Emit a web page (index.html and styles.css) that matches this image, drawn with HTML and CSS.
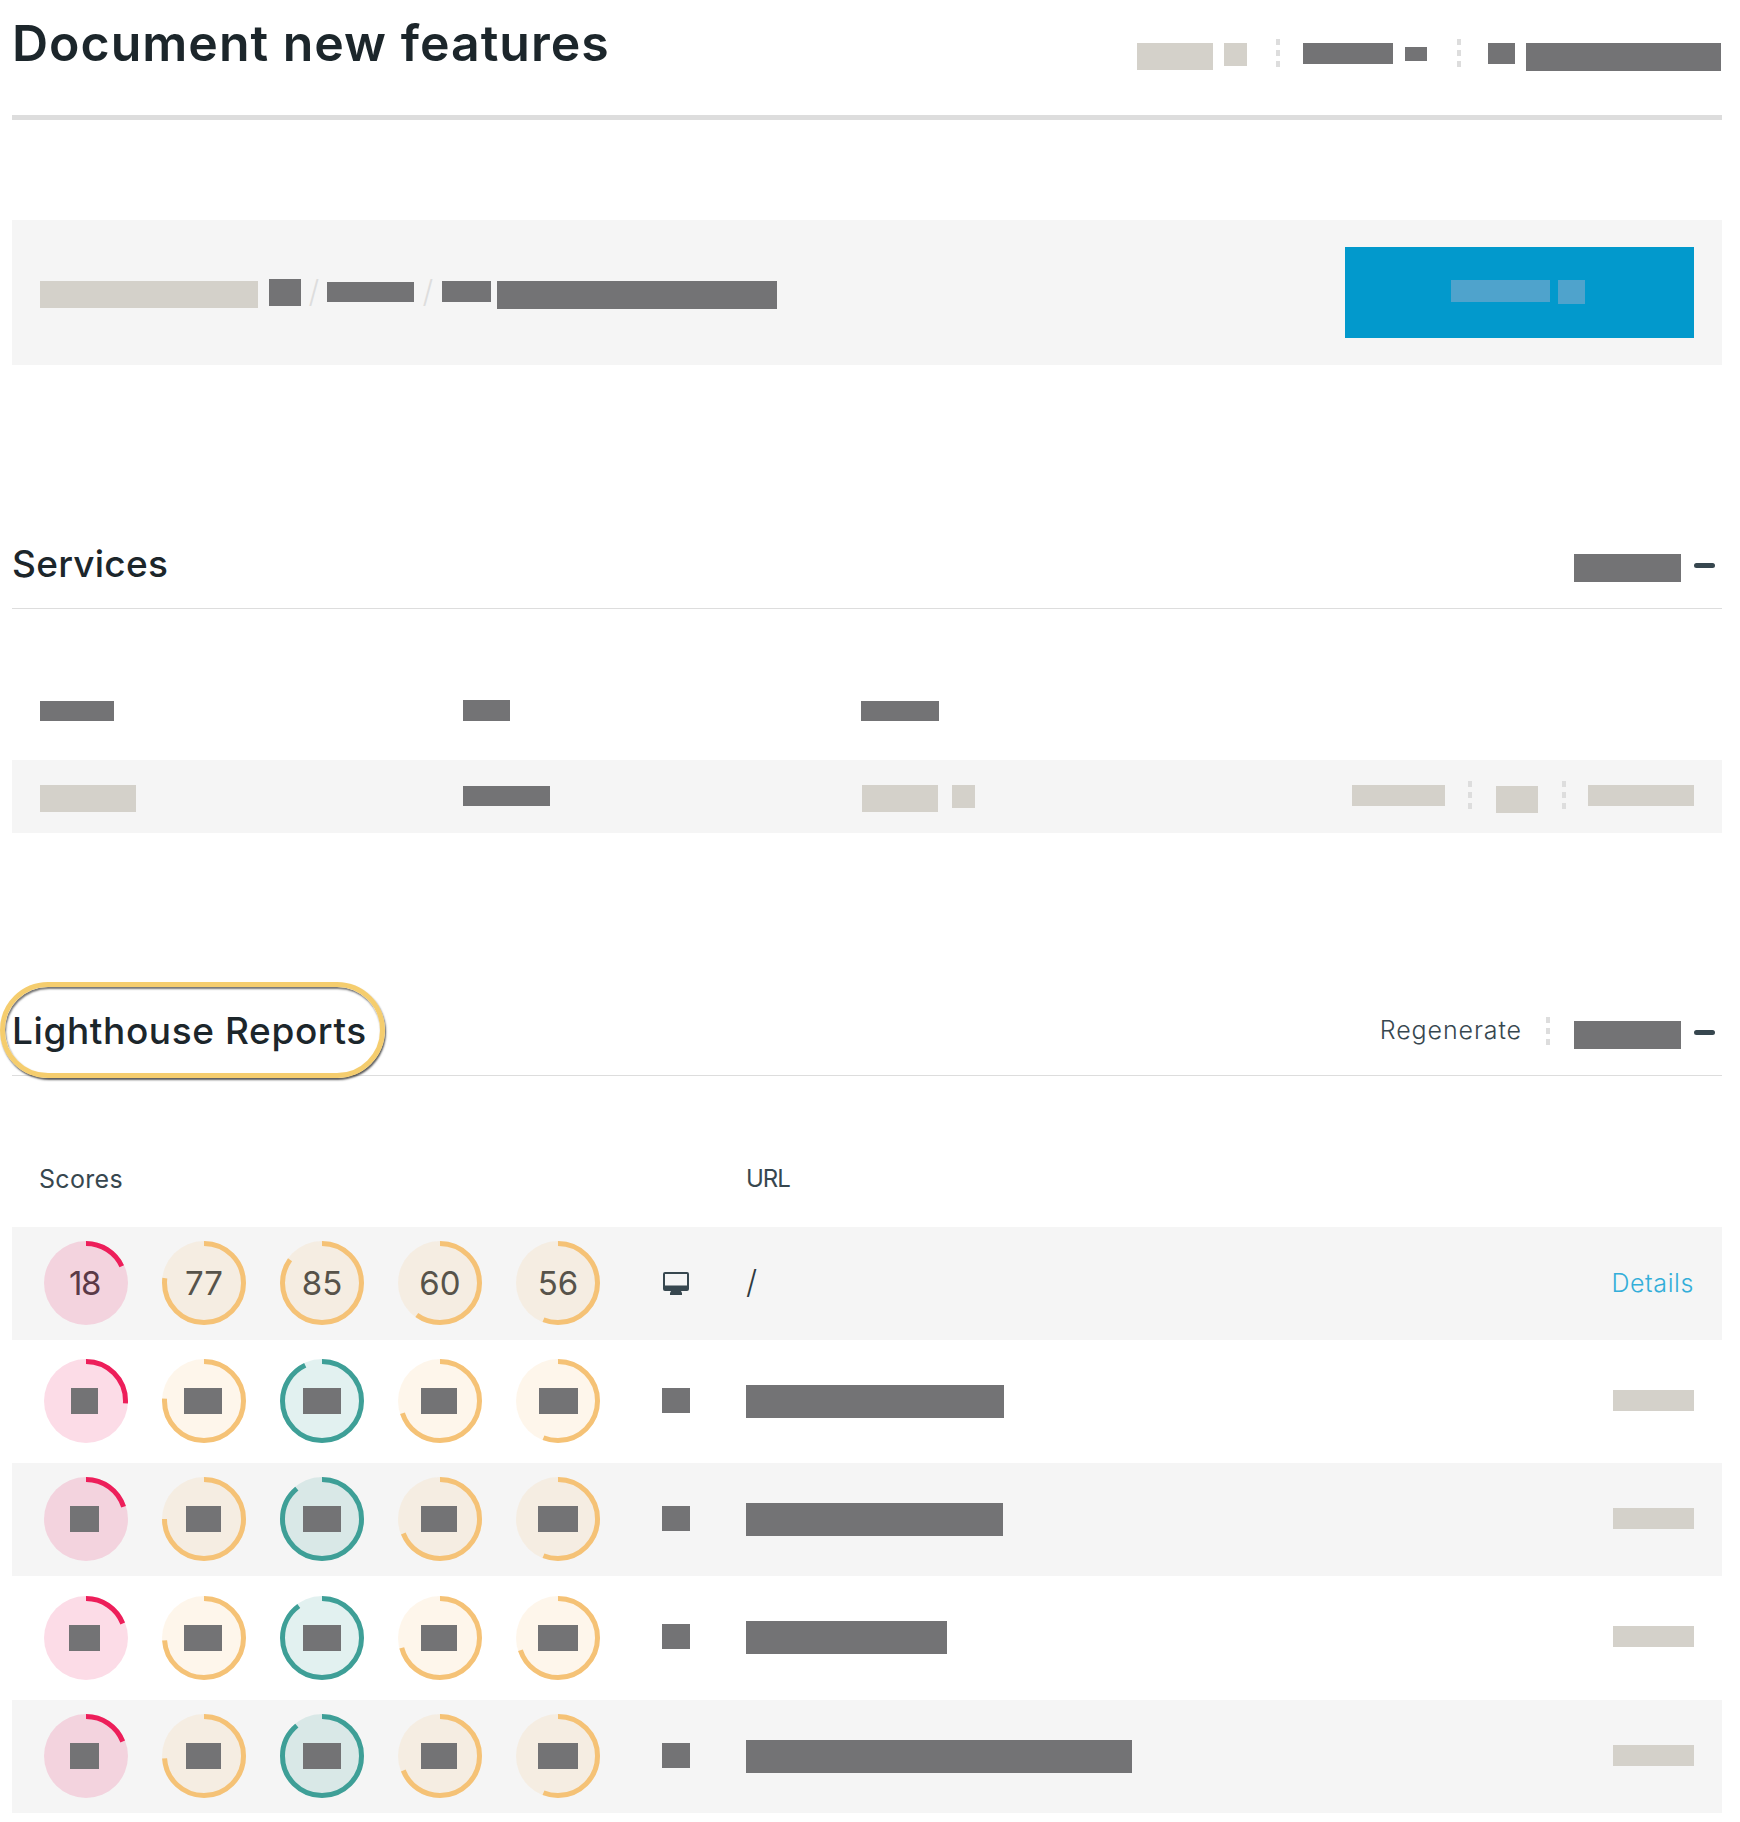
FILE: index.html
```html
<!DOCTYPE html>
<html lang="en">
<head>
  <meta charset="UTF-8">
  <title>Document new features</title>
  <link rel="stylesheet" href="styles.css">
</head>
<body>
  <div class="container">
    <header class="page-head">
      <h1>Document new features</h1>
      <div class="page-actions">
        <span class="mask light w-76 h-27"></span>
        <span class="mask light w-23 h-23 ml-11"></span>
        <span class="dots ml-29 up-4"></span>
        <span class="mask dark w-90 h-21 ml-23"></span>
        <span class="mask dark w-22 h-14 ml-12 mt-4"></span>
        <span class="dots ml-30 up-4"></span>
        <span class="mask dark w-27 h-21 ml-27"></span>
        <span class="mask dark w-195 h-28 ml-11"></span>
      </div>
    </header>

    <section class="deploy-panel">
      <div class="crumbs">
        <span class="mask light w-218 h-27 mt-2"></span>
        <span class="mask dark w-32 h-27 ml-11"></span>
        <span class="slash">/</span>
        <span class="mask dark w-87 h-20 mt-3"></span>
        <span class="slash wide">/</span>
        <span class="mask dark w-49 h-21 mt-2"></span>
        <span class="mask dark w-280 h-28 ml-6 mt-2"></span>
      </div>
      <div class="deploy-button">
        <span class="mask pale w-99 h-22"></span>
        <span class="mask pale w-27 h-24"></span>
      </div>
    </section>

    <section class="block">
      <div class="block-head">
        <h2>Services</h2>
        <div class="block-actions">
          <span class="mask dark w-107 h-28"></span>
          <span class="collapse"></span>
        </div>
      </div>
      <div class="services-labels">
        <span class="col-name"><span class="mask dark w-74 h-20"></span></span>
        <span class="col-type"><span class="mask dark w-47 h-21 up-1"></span></span>
        <span class="col-state"><span class="mask dark w-78 h-20"></span></span>
      </div>
      <div class="services-row">
        <span class="col-name"><span class="mask light w-96 h-27"></span></span>
        <span class="col-type"><span class="mask dark w-87 h-20 mt-1"></span></span>
        <span class="col-state">
          <span class="mask light w-76 h-27 ml-1"></span>
          <span class="mask light w-23 h-23 ml-14"></span>
        </span>
        <div class="services-links">
          <span class="mask light w-93 h-21"></span>
          <span class="dots ml-23 up-4"></span>
          <span class="mask light w-42 h-27 ml-24 mt-1"></span>
          <span class="dots ml-24 up-4"></span>
          <span class="mask light w-106 h-21 ml-22"></span>
        </div>
      </div>
    </section>

    <section class="block block-reports">
      <div class="block-head">
        <h2 class="circled">Lighthouse Reports</h2>
        <div class="block-actions">
          <a class="regenerate">Regenerate</a>
          <span class="dots head-dots"></span>
          <span class="mask dark w-107 h-28"></span>
          <span class="collapse"></span>
        </div>
      </div>
      <div class="reports-labels">
        <span class="label-scores">Scores</span>
        <span class="label-url">URL</span>
      </div>

      <div class="report">
        <div class="score red"><svg viewBox="0 0 84 84"><circle class="ring-bg" cx="42" cy="42" r="42"/><circle class="ring" cx="42" cy="42" r="39.5" pathLength="100" stroke-dasharray="18 100"/></svg><span>18</span></div>
        <div class="score amber"><svg viewBox="0 0 84 84"><circle class="ring-bg" cx="42" cy="42" r="42"/><circle class="ring" cx="42" cy="42" r="39.5" pathLength="100" stroke-dasharray="77 100"/></svg><span>77</span></div>
        <div class="score amber"><svg viewBox="0 0 84 84"><circle class="ring-bg" cx="42" cy="42" r="42"/><circle class="ring" cx="42" cy="42" r="39.5" pathLength="100" stroke-dasharray="85 100"/></svg><span>85</span></div>
        <div class="score amber"><svg viewBox="0 0 84 84"><circle class="ring-bg" cx="42" cy="42" r="42"/><circle class="ring" cx="42" cy="42" r="39.5" pathLength="100" stroke-dasharray="60 100"/></svg><span>60</span></div>
        <div class="score amber"><svg viewBox="0 0 84 84"><circle class="ring-bg" cx="42" cy="42" r="42"/><circle class="ring" cx="42" cy="42" r="39.5" pathLength="100" stroke-dasharray="56 100"/></svg><span>56</span></div>
        <div class="device">
          <svg class="monitor" viewBox="0 0 26 23"><path d="M2 0h22a2 2 0 0 1 2 2v15a2 2 0 0 1-2 2h-6l1 2v2H7v-2l1-2H2a2 2 0 0 1-2-2V2a2 2 0 0 1 2-2zm0 2v11.500h22V2z" fill-rule="evenodd"/></svg>
        </div>
        <div class="url url-path">/</div>
        <a class="details">Details</a>
      </div>

      <div class="report">
        <div class="score red"><svg viewBox="0 0 84 84"><circle class="ring-bg" cx="42" cy="42" r="42"/><circle class="ring" cx="42" cy="42" r="39.5" pathLength="100" stroke-dasharray="26 100"/></svg><span class="mask dark w-27 h-26"></span></div>
        <div class="score amber"><svg viewBox="0 0 84 84"><circle class="ring-bg" cx="42" cy="42" r="42"/><circle class="ring" cx="42" cy="42" r="39.5" pathLength="100" stroke-dasharray="76 100"/></svg><span class="mask dark w-38 h-26"></span></div>
        <div class="score teal"><svg viewBox="0 0 84 84"><circle class="ring-bg" cx="42" cy="42" r="42"/><circle class="ring" cx="42" cy="42" r="39.5" pathLength="100" stroke-dasharray="93 100"/></svg><span class="mask dark w-38 h-26"></span></div>
        <div class="score amber"><svg viewBox="0 0 84 84"><circle class="ring-bg" cx="42" cy="42" r="42"/><circle class="ring" cx="42" cy="42" r="39.5" pathLength="100" stroke-dasharray="70 100"/></svg><span class="mask dark w-36 h-26"></span></div>
        <div class="score amber"><svg viewBox="0 0 84 84"><circle class="ring-bg" cx="42" cy="42" r="42"/><circle class="ring" cx="42" cy="42" r="39.5" pathLength="100" stroke-dasharray="56 100"/></svg><span class="mask dark w-39 h-26"></span></div>
        <div class="device"><span class="mask dark w-28 h-25"></span></div>
        <div class="url"><span class="mask dark w-258 h-33"></span></div>
        <span class="mask light details-mask"></span>
      </div>

      <div class="report">
        <div class="score red"><svg viewBox="0 0 84 84"><circle class="ring-bg" cx="42" cy="42" r="42"/><circle class="ring" cx="42" cy="42" r="39.5" pathLength="100" stroke-dasharray="20 100"/></svg><span class="mask dark w-29 h-26"></span></div>
        <div class="score amber"><svg viewBox="0 0 84 84"><circle class="ring-bg" cx="42" cy="42" r="42"/><circle class="ring" cx="42" cy="42" r="39.5" pathLength="100" stroke-dasharray="75 100"/></svg><span class="mask dark w-35 h-26"></span></div>
        <div class="score teal"><svg viewBox="0 0 84 84"><circle class="ring-bg" cx="42" cy="42" r="42"/><circle class="ring" cx="42" cy="42" r="39.5" pathLength="100" stroke-dasharray="89 100"/></svg><span class="mask dark w-38 h-26"></span></div>
        <div class="score amber"><svg viewBox="0 0 84 84"><circle class="ring-bg" cx="42" cy="42" r="42"/><circle class="ring" cx="42" cy="42" r="39.5" pathLength="100" stroke-dasharray="69 100"/></svg><span class="mask dark w-36 h-26"></span></div>
        <div class="score amber"><svg viewBox="0 0 84 84"><circle class="ring-bg" cx="42" cy="42" r="42"/><circle class="ring" cx="42" cy="42" r="39.5" pathLength="100" stroke-dasharray="56 100"/></svg><span class="mask dark w-40 h-26"></span></div>
        <div class="device"><span class="mask dark w-28 h-25"></span></div>
        <div class="url"><span class="mask dark w-257 h-33"></span></div>
        <span class="mask light details-mask"></span>
      </div>

      <div class="report">
        <div class="score red"><svg viewBox="0 0 84 84"><circle class="ring-bg" cx="42" cy="42" r="42"/><circle class="ring" cx="42" cy="42" r="39.5" pathLength="100" stroke-dasharray="19 100"/></svg><span class="mask dark w-31 h-26"></span></div>
        <div class="score amber"><svg viewBox="0 0 84 84"><circle class="ring-bg" cx="42" cy="42" r="42"/><circle class="ring" cx="42" cy="42" r="39.5" pathLength="100" stroke-dasharray="74 100"/></svg><span class="mask dark w-38 h-26"></span></div>
        <div class="score teal"><svg viewBox="0 0 84 84"><circle class="ring-bg" cx="42" cy="42" r="42"/><circle class="ring" cx="42" cy="42" r="39.5" pathLength="100" stroke-dasharray="90 100"/></svg><span class="mask dark w-38 h-26"></span></div>
        <div class="score amber"><svg viewBox="0 0 84 84"><circle class="ring-bg" cx="42" cy="42" r="42"/><circle class="ring" cx="42" cy="42" r="39.5" pathLength="100" stroke-dasharray="71 100"/></svg><span class="mask dark w-36 h-26"></span></div>
        <div class="score amber"><svg viewBox="0 0 84 84"><circle class="ring-bg" cx="42" cy="42" r="42"/><circle class="ring" cx="42" cy="42" r="39.5" pathLength="100" stroke-dasharray="70 100"/></svg><span class="mask dark w-40 h-26"></span></div>
        <div class="device"><span class="mask dark w-28 h-25"></span></div>
        <div class="url"><span class="mask dark w-201 h-33"></span></div>
        <span class="mask light details-mask"></span>
      </div>

      <div class="report">
        <div class="score red"><svg viewBox="0 0 84 84"><circle class="ring-bg" cx="42" cy="42" r="42"/><circle class="ring" cx="42" cy="42" r="39.5" pathLength="100" stroke-dasharray="19 100"/></svg><span class="mask dark w-29 h-26"></span></div>
        <div class="score amber"><svg viewBox="0 0 84 84"><circle class="ring-bg" cx="42" cy="42" r="42"/><circle class="ring" cx="42" cy="42" r="39.5" pathLength="100" stroke-dasharray="74 100"/></svg><span class="mask dark w-35 h-26"></span></div>
        <div class="score teal"><svg viewBox="0 0 84 84"><circle class="ring-bg" cx="42" cy="42" r="42"/><circle class="ring" cx="42" cy="42" r="39.5" pathLength="100" stroke-dasharray="89 100"/></svg><span class="mask dark w-38 h-26"></span></div>
        <div class="score amber"><svg viewBox="0 0 84 84"><circle class="ring-bg" cx="42" cy="42" r="42"/><circle class="ring" cx="42" cy="42" r="39.5" pathLength="100" stroke-dasharray="69 100"/></svg><span class="mask dark w-36 h-26"></span></div>
        <div class="score amber"><svg viewBox="0 0 84 84"><circle class="ring-bg" cx="42" cy="42" r="42"/><circle class="ring" cx="42" cy="42" r="39.5" pathLength="100" stroke-dasharray="56 100"/></svg><span class="mask dark w-40 h-26"></span></div>
        <div class="device"><span class="mask dark w-28 h-25"></span></div>
        <div class="url"><span class="mask dark w-386 h-33"></span></div>
        <span class="mask light details-mask"></span>
      </div>
    </section>
  </div>
</body>
</html>
```

FILE: styles.css
```css
body {
  margin: 0;
  background: #fff;
  color: #37474f;
  font-family: Inter, "Open Sans", sans-serif;
}
.container {
  padding: 0 18px 9px 12px;
}
h1, h2 {
  margin: 0;
  color: #1c262b;
  font-weight: 500;
}

/* redacted blocks */
.mask {
  display: block;
  flex: none;
}
.dark { background: #737375; }
.light { background: #d4d1ca; }
.pale { background: #4fa3cc; }
.dots {
  display: block;
  flex: none;
  width: 4px;
  height: 28px;
  background: repeating-linear-gradient(#ddd 0 6px, transparent 6px 11px);
}

.w-22 { width: 22px; }
.w-23 { width: 23px; }
.w-27 { width: 27px; }
.w-28 { width: 28px; }
.w-29 { width: 29px; }
.w-31 { width: 31px; }
.w-32 { width: 32px; }
.w-35 { width: 35px; }
.w-36 { width: 36px; }
.w-38 { width: 38px; }
.w-39 { width: 39px; }
.w-40 { width: 40px; }
.w-42 { width: 42px; }
.w-47 { width: 47px; }
.w-49 { width: 49px; }
.w-74 { width: 74px; }
.w-76 { width: 76px; }
.w-78 { width: 78px; }
.w-87 { width: 87px; }
.w-90 { width: 90px; }
.w-93 { width: 93px; }
.w-96 { width: 96px; }
.w-99 { width: 99px; }
.w-106 { width: 106px; }
.w-107 { width: 107px; }
.w-195 { width: 195px; }
.w-201 { width: 201px; }
.w-218 { width: 218px; }
.w-257 { width: 257px; }
.w-258 { width: 258px; }
.w-280 { width: 280px; }
.w-386 { width: 386px; }
.h-14 { height: 14px; }
.h-20 { height: 20px; }
.h-21 { height: 21px; }
.h-22 { height: 22px; }
.h-23 { height: 23px; }
.h-24 { height: 24px; }
.h-25 { height: 25px; }
.h-26 { height: 26px; }
.h-27 { height: 27px; }
.h-28 { height: 28px; }
.h-33 { height: 33px; }
.ml-1 { margin-left: 1px; }
.ml-6 { margin-left: 6px; }
.ml-11 { margin-left: 11px; }
.ml-12 { margin-left: 12px; }
.ml-14 { margin-left: 14px; }
.ml-22 { margin-left: 22px; }
.ml-23 { margin-left: 23px; }
.ml-24 { margin-left: 24px; }
.ml-27 { margin-left: 27px; }
.ml-29 { margin-left: 29px; }
.ml-30 { margin-left: 30px; }
.mt-1 { margin-top: 1px; }
.mt-2 { margin-top: 2px; }
.mt-3 { margin-top: 3px; }
.mt-4 { margin-top: 4px; }
.up-1 { margin-top: -1px; }
.up-4 { margin-top: -4px; }

/* page header */
.page-head {
  display: flex;
  justify-content: space-between;
  height: 115px;
  border-bottom: 5px solid #ddd;
}
.page-head h1 {
  margin-top: 14px;
  font-size: 50px;
  font-weight: 600;
  line-height: 58px;
  letter-spacing: 1px;
}
.page-actions {
  display: flex;
  align-items: flex-start;
  padding: 43px 1px 0 0;
}

/* panel with breadcrumb and button */
.deploy-panel {
  display: flex;
  justify-content: space-between;
  align-items: center;
  margin-top: 100px;
  height: 145px;
  padding: 0 28px;
  background: #f5f5f5;
}
.crumbs {
  display: flex;
  align-items: flex-start;
  height: 87px;
  margin-top: 59px;
}
.slash {
  width: 26px;
  margin-top: -6px;
  color: #ddd;
  font-size: 31px;
  font-weight: 300;
  line-height: 38px;
  text-align: center;
}
.slash.wide {
  width: 28px;
}
.deploy-button {
  display: flex;
  justify-content: center;
  align-items: flex-start;
  gap: 8px;
  width: 349px;
  height: 91px;
  padding: 33px 3px 0 0;
  box-sizing: border-box;
  background: #0299cc;
}

/* collapsible blocks */
.block {
  margin-top: 170px;
}
.block-reports {
  margin-top: 169px;
}
.block-head {
  position: relative;
  display: flex;
  justify-content: space-between;
  align-items: flex-start;
  height: 73px;
  border-bottom: 1px solid #ddd;
}
.block-head h2 {
  margin-top: 7px;
  font-size: 37px;
  line-height: 44px;
  letter-spacing: 0.25px;
}
.block-head .circled {
  letter-spacing: 0.6px;
}
.block-actions {
  display: flex;
  align-items: flex-start;
  padding: 19px 7px 0 0;
}
.collapse {
  width: 21px;
  height: 5px;
  margin: 9px 0 0 13px;
  border-radius: 3px;
  background: #37474f;
}
.regenerate {
  margin-top: -5px;
  color: #37474f;
  font-size: 25px;
  font-weight: 300;
  line-height: 28px;
  letter-spacing: 0.9px;
}
.head-dots {
  margin: -4px 24px 0;
}
/* highlight ring drawn over the heading */
.circled::after {
  content: "";
  position: absolute;
  left: -12px;
  top: -20px;
  width: 375px;
  height: 86px;
  border: 5px solid #f5cd6e;
  border-radius: 48px;
  box-shadow: 1px 2px 2px rgba(0, 0, 0, 0.65), inset 1px 2px 2px rgba(0, 0, 0, 0.55);
}

/* services table */
.services-labels,
.services-row {
  display: flex;
  align-items: flex-start;
  padding-left: 28px;
}
.services-labels {
  height: 59px;
  padding-top: 92px;
}
.services-row {
  height: 48px;
  padding-top: 25px;
  padding-right: 28px;
  background: #f5f5f5;
}
.col-name {
  display: flex;
  width: 423px;
}
.col-type {
  display: flex;
  width: 398px;
}
.col-state {
  display: flex;
  width: 400px;
}
.services-links {
  display: flex;
  align-items: flex-start;
  margin-left: auto;
}

/* lighthouse table */
.reports-labels {
  display: flex;
  height: 62px;
  padding-top: 89px;
  font-size: 25px;
  line-height: 28px;
}
.label-scores {
  margin-left: 27px;
  width: 707px;
  letter-spacing: 0.3px;
}
.label-url {
  font-size: 24px;
  letter-spacing: -1px;
}
.report {
  display: flex;
  align-items: center;
  box-sizing: border-box;
  height: 123px;
  padding: 0 28px 1px 32px;
}
.report:nth-of-type(odd) {
  height: 113px;
  background: #f5f5f5;
}
.report:nth-of-type(6) {
  height: 124px;
}
.score {
  position: relative;
  display: flex;
  justify-content: center;
  align-items: center;
  flex: none;
  width: 84px;
  height: 84px;
  margin-right: 34px;
  font-size: 33px;
}
.score svg {
  position: absolute;
  inset: 0;
  transform: rotate(-90deg);
}
.score span {
  position: relative;
}
.score:nth-child(1) span {
  margin-right: 3px;
}
.score:nth-child(2) .mask,
.score:nth-child(4) .mask {
  margin-right: 2px;
}
.ring {
  fill: none;
  stroke-width: 5;
}
.red .ring-bg { fill: rgba(237, 20, 91, 0.15); }
.red .ring { stroke: #ed1e5a; }
.red { color: #5a3a47; letter-spacing: -1.5px; }
.amber .ring-bg { fill: rgba(245, 194, 118, 0.15); }
.amber .ring { stroke: #f5c276; }
.amber { color: #57534a; }
.teal .ring-bg { fill: rgba(62, 159, 151, 0.15); }
.teal .ring { stroke: #3e9f97; }
.device {
  width: 28px;
  margin-left: 28px;
}
.device .mask {
  margin-top: -2px;
}
.monitor {
  display: block;
  width: 26px;
  height: 23px;
  margin-left: 1px;
  fill: #37474f;
}
.url {
  margin-left: 56px;
  font-size: 32px;
  font-weight: 300;
  color: #2f3a40;
}
.url-path {
  margin-top: -4px;
}
.details {
  margin-left: auto;
  color: #33aed9;
  font-size: 25px;
  font-weight: 300;
  letter-spacing: 0.6px;
}
.details-mask {
  width: 81px;
  height: 21px;
  margin-top: -2px;
  margin-left: auto;
}
```
